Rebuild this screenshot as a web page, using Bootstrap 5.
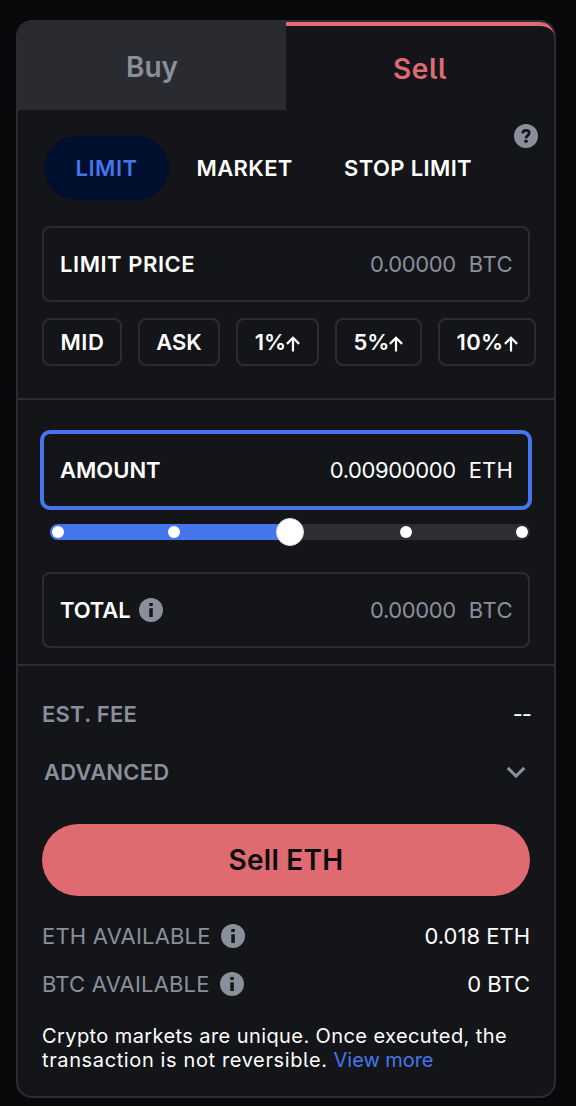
<!DOCTYPE html>
<html lang="en" data-bs-theme="dark">
<head>
<meta charset="utf-8">
<meta name="viewport" content="width=device-width, initial-scale=1">
<title>Sell ETH</title>
<link href="https://cdn.jsdelivr.net/npm/bootstrap@5.3.0/dist/css/bootstrap.min.css" rel="stylesheet">
<style>
  :root { --line: #2c2d32; --panel: #141519; --muted: #8a8f9c; --brand: #4775ec; --sell: #df6a70; }
  body { background: #08090b; color: #fff; font-family: Inter, "Liberation Sans", sans-serif; font-size: 22px; line-height: 24px; font-feature-settings: "cv05"; padding: 20px 20px 8px 16px; }
  .ticket { --bs-card-bg: var(--panel); --bs-card-border-color: var(--line); --bs-card-border-width: 2px; --bs-card-border-radius: 16px; --bs-card-inner-border-radius: 14px; color: #fff; height: 1078px; }
  .side-tabs { height: 88px; border-radius: 14px 14px 0 0; overflow: hidden; }
  .side-tabs .nav-link { border-radius: 0; font-size: 28px; font-weight: 600; padding: 2px 0 0; color: var(--muted); background: #2a2b30; display: flex; align-items: center; justify-content: center; letter-spacing: 0; }
  .side-tabs .nav-link.active { color: var(--sell); background: var(--panel); border-top: 4px solid var(--sell); border-radius: 0 14px 0 0; letter-spacing: .6px; }
  .sect { padding: 0 24px; }
  .sect + .sect { border-top: 2px solid var(--line); }
  .kinds { height: 64px; margin: 26px 0; padding-left: 2px; }
  .kinds .btn { font-size: 22px; font-weight: 600; line-height: 24px; border: 0; color: #fff; padding: 0; letter-spacing: .38px; text-align: left; }
  .kinds .btn.active { background: #010f2e; color: var(--brand); width: 125px; height: 64px; text-align: center; letter-spacing: .55px; }
  .tip { position: absolute; right: 16px; top: 102px; }
  .field { height: 76px; border: 2px solid var(--line); border-radius: 8px; padding: 0 15px 0 16px; }
  .field b, .strong { font-weight: 600; }
  .strong { letter-spacing: .24px; }
  .field.focus { border: 4px solid var(--brand); height: 80px; margin: 0 -2px; border-radius: 10px; }
  .unit { margin-left: 13px; }
  .dim { color: var(--muted); }
  .chips { gap: 16px; margin-top: 16px; width: 494px; }
  .chips .btn { height: 48px; border: 2px solid var(--line); border-radius: 8px; color: #fff; font-size: 22px; font-weight: 600; line-height: 24px; padding: 0; display: flex; align-items: center; justify-content: center; flex: none; }
  .chips svg { margin-top: 4px; }
  .steps { height: 16px; margin: 14px 0 32px 8px; border-radius: 8px; background: linear-gradient(90deg, var(--brand) 240px, #2d2e33 240px); padding: 0 2px; display: flex; align-items: center; justify-content: space-between; position: relative; }
  .steps i { width: 12px; height: 12px; border-radius: 50%; background: #fff; }
  .steps .knob { position: absolute; left: 50%; top: 50%; transform: translate(-50%, -50%); width: 28px; height: 28px; border: 1px solid #dcdde1; }
  .order-btn { height: 72px; border: 0; background: var(--sell) !important; color: #0a0b0d !important; font-size: 28px; font-weight: 600; letter-spacing: .25px; }
  .note { font-size: 20px; line-height: 24px; letter-spacing: .41px; white-space: nowrap; }
  .note a { color: var(--brand); text-decoration: none; letter-spacing: -.05px; }
</style>
</head>
<body>
<svg class="d-none">
  <symbol id="info" viewBox="0 0 24 24"><circle cx="12" cy="12" r="12" fill="#8a8f9c"/><path d="M10.3 5.1h3.5v2.8h-3.5zM10.3 10.2h3.5V19h-3.5z" fill="#141519"/></symbol>
  <symbol id="up" viewBox="0 0 14 16"><path d="M7 15.5V1.8M.9 7.9 7 1.8l6.1 6.1" fill="none" stroke="#fff" stroke-width="2.2"/></symbol>
</svg>
<main class="card ticket">
  <nav class="nav nav-pills nav-fill side-tabs">
    <a class="nav-link w-50 flex-grow-0" href="#">Buy</a>
    <a class="nav-link w-50 flex-grow-0 active" href="#">Sell</a>
  </nav>
  <svg class="tip" width="24" height="24" viewBox="0 0 24 24"><circle cx="12" cy="12" r="12" fill="#8a8f9c"/><path d="M8.6 9.4C8.8 7.3 10.1 6.3 12 6.3c2 0 3.2 1.1 3.2 2.8 0 2.2-3.1 2.4-3.2 5.2" fill="none" stroke="#141519" stroke-width="2.7"/><circle cx="12" cy="17.2" r="1.8" fill="#141519"/></svg>

  <section class="sect" style="height:288px">
    <div class="kinds d-flex align-items-center">
      <button class="btn rounded-pill active">LIMIT</button>
      <button class="btn" style="margin-left:27.5px;width:147.5px">MARKET</button>
      <button class="btn">STOP LIMIT</button>
    </div>
    <div class="field d-flex align-items-center">
      <b style="letter-spacing:.55px">LIMIT PRICE</b>
      <span class="ms-auto dim" style="letter-spacing:-.4px">0.00000</span><span class="unit dim" style="letter-spacing:.5px">BTC</span>
    </div>
    <div class="chips d-flex">
      <button class="btn" style="width:80px;padding-left:1px;letter-spacing:.6px">MID</button>
      <button class="btn" style="width:82px">ASK</button>
      <button class="btn" style="width:83px">1%<svg width="14" height="16"><use href="#up"/></svg></button>
      <button class="btn" style="width:87px">5%<svg width="14" height="16"><use href="#up"/></svg></button>
      <button class="btn" style="width:98px;letter-spacing:.4px">10%<svg width="14" height="16"><use href="#up"/></svg></button>
    </div>
  </section>

  <section class="sect" style="height:266px;padding-top:30px">
    <div class="field focus d-flex align-items-center">
      <b>AMOUNT</b>
      <span class="ms-auto" style="letter-spacing:-.4px">0.00900000</span><span class="unit" style="letter-spacing:.2px">ETH</span>
    </div>
    <div class="steps"><i></i><i></i><i class="invisible"></i><i></i><i></i><i class="knob"></i></div>
    <div class="field d-flex align-items-center">
      <b style="letter-spacing:-.1px">TOTAL</b><svg class="ms-2" width="24" height="24"><use href="#info"/></svg>
      <span class="ms-auto dim" style="letter-spacing:-.4px">0.00000</span><span class="unit dim" style="letter-spacing:.5px">BTC</span>
    </div>
  </section>

  <section class="sect" style="padding-top:36px">
    <div class="d-flex justify-content-between"><span class="dim strong">EST. FEE</span><span style="letter-spacing:-1px;margin-right:-1px">--</span></div>
    <div class="d-flex justify-content-between align-items-center" style="margin-top:34px;padding:0 4px 0 2px"><span class="dim strong">ADVANCED</span>
      <svg width="20" height="12" viewBox="0 0 20 12"><path d="m1.7 1.9 8.3 8.2 8.3-8.2" fill="none" stroke="#8a8f9c" stroke-width="3"/></svg></div>
    <button class="btn order-btn rounded-pill w-100 d-block" style="margin-top:40px">Sell ETH</button>
    <div class="d-flex align-items-center" style="margin-top:28px"><span class="dim" style="letter-spacing:.2px">ETH AVAILABLE</span><svg style="margin-left:10.5px" width="24" height="24"><use href="#info"/></svg><span class="ms-auto">0.018 ETH</span></div>
    <div class="d-flex align-items-center" style="margin-top:24px"><span class="dim" style="letter-spacing:.2px">BTC AVAILABLE</span><svg style="margin-left:10.5px" width="24" height="24"><use href="#info"/></svg><span class="ms-auto">0 BTC</span></div>
    <p class="note mb-0" style="margin-top:28px">Crypto markets are unique. Once executed, the<br><span style="letter-spacing:.62px">transaction is not reversible.</span> <a href="#">View more</a></p>
  </section>
</main>
<script src="https://cdn.jsdelivr.net/npm/bootstrap@5.3.0/dist/js/bootstrap.bundle.min.js"></script>
</body>
</html>
